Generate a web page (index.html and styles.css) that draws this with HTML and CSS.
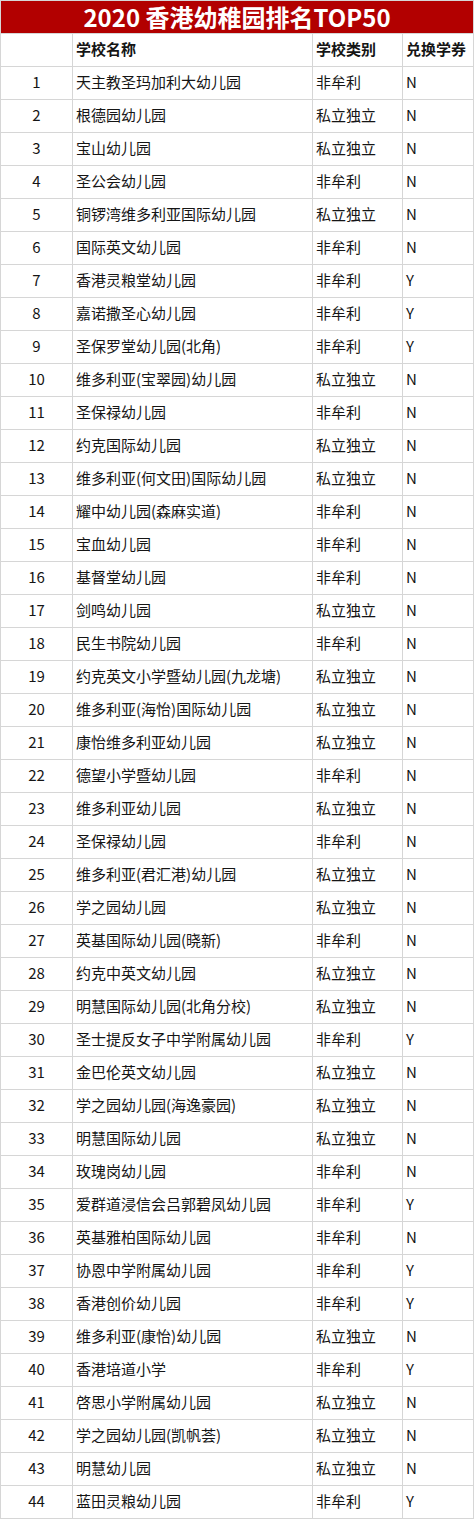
FILE: index.html
```html
<!DOCTYPE html>
<html lang="zh">
<head>
<meta charset="utf-8">
<link rel="stylesheet" href="styles.css">
</head>
<body>
<table class="rank">
<colgroup>
<col class="c-no"><col class="c-name"><col class="c-type"><col class="c-voucher">
</colgroup>
<thead>
<tr><th class="title" colspan="4">2020 香港幼稚园排名TOP50</th></tr>
<tr class="head"><th></th><th>学校名称</th><th>学校类别</th><th>兑换学券</th></tr>
</thead>
<tbody>
<tr><td class="no">1</td><td>天主教圣玛加利大幼儿园</td><td>非牟利</td><td>N</td></tr>
<tr><td class="no">2</td><td>根德园幼儿园</td><td>私立独立</td><td>N</td></tr>
<tr><td class="no">3</td><td>宝山幼儿园</td><td>私立独立</td><td>N</td></tr>
<tr><td class="no">4</td><td>圣公会幼儿园</td><td>非牟利</td><td>N</td></tr>
<tr><td class="no">5</td><td>铜锣湾维多利亚国际幼儿园</td><td>私立独立</td><td>N</td></tr>
<tr><td class="no">6</td><td>国际英文幼儿园</td><td>非牟利</td><td>N</td></tr>
<tr><td class="no">7</td><td>香港灵粮堂幼儿园</td><td>非牟利</td><td>Y</td></tr>
<tr><td class="no">8</td><td>嘉诺撒圣心幼儿园</td><td>非牟利</td><td>Y</td></tr>
<tr><td class="no">9</td><td>圣保罗堂幼儿园(北角)</td><td>非牟利</td><td>Y</td></tr>
<tr><td class="no">10</td><td>维多利亚(宝翠园)幼儿园</td><td>私立独立</td><td>N</td></tr>
<tr><td class="no">11</td><td>圣保禄幼儿园</td><td>非牟利</td><td>N</td></tr>
<tr><td class="no">12</td><td>约克国际幼儿园</td><td>私立独立</td><td>N</td></tr>
<tr><td class="no">13</td><td>维多利亚(何文田)国际幼儿园</td><td>私立独立</td><td>N</td></tr>
<tr><td class="no">14</td><td>耀中幼儿园(森麻实道)</td><td>非牟利</td><td>N</td></tr>
<tr><td class="no">15</td><td>宝血幼儿园</td><td>非牟利</td><td>N</td></tr>
<tr><td class="no">16</td><td>基督堂幼儿园</td><td>非牟利</td><td>N</td></tr>
<tr><td class="no">17</td><td>剑鸣幼儿园</td><td>私立独立</td><td>N</td></tr>
<tr><td class="no">18</td><td>民生书院幼儿园</td><td>非牟利</td><td>N</td></tr>
<tr><td class="no">19</td><td>约克英文小学暨幼儿园(九龙塘)</td><td>私立独立</td><td>N</td></tr>
<tr><td class="no">20</td><td>维多利亚(海怡)国际幼儿园</td><td>私立独立</td><td>N</td></tr>
<tr><td class="no">21</td><td>康怡维多利亚幼儿园</td><td>私立独立</td><td>N</td></tr>
<tr><td class="no">22</td><td>德望小学暨幼儿园</td><td>非牟利</td><td>N</td></tr>
<tr><td class="no">23</td><td>维多利亚幼儿园</td><td>私立独立</td><td>N</td></tr>
<tr><td class="no">24</td><td>圣保禄幼儿园</td><td>非牟利</td><td>N</td></tr>
<tr><td class="no">25</td><td>维多利亚(君汇港)幼儿园</td><td>私立独立</td><td>N</td></tr>
<tr><td class="no">26</td><td>学之园幼儿园</td><td>私立独立</td><td>N</td></tr>
<tr><td class="no">27</td><td>英基国际幼儿园(晓新)</td><td>非牟利</td><td>N</td></tr>
<tr><td class="no">28</td><td>约克中英文幼儿园</td><td>私立独立</td><td>N</td></tr>
<tr><td class="no">29</td><td>明慧国际幼儿园(北角分校)</td><td>私立独立</td><td>N</td></tr>
<tr><td class="no">30</td><td>圣士提反女子中学附属幼儿园</td><td>非牟利</td><td>Y</td></tr>
<tr><td class="no">31</td><td>金巴伦英文幼儿园</td><td>私立独立</td><td>N</td></tr>
<tr><td class="no">32</td><td>学之园幼儿园(海逸豪园)</td><td>私立独立</td><td>N</td></tr>
<tr><td class="no">33</td><td>明慧国际幼儿园</td><td>私立独立</td><td>N</td></tr>
<tr><td class="no">34</td><td>玫瑰岗幼儿园</td><td>非牟利</td><td>N</td></tr>
<tr><td class="no">35</td><td>爱群道浸信会吕郭碧凤幼儿园</td><td>非牟利</td><td>Y</td></tr>
<tr><td class="no">36</td><td>英基雅柏国际幼儿园</td><td>非牟利</td><td>N</td></tr>
<tr><td class="no">37</td><td>协恩中学附属幼儿园</td><td>非牟利</td><td>Y</td></tr>
<tr><td class="no">38</td><td>香港创价幼儿园</td><td>非牟利</td><td>Y</td></tr>
<tr><td class="no">39</td><td>维多利亚(康怡)幼儿园</td><td>私立独立</td><td>N</td></tr>
<tr><td class="no">40</td><td>香港培道小学</td><td>非牟利</td><td>Y</td></tr>
<tr><td class="no">41</td><td>啓思小学附属幼儿园</td><td>私立独立</td><td>N</td></tr>
<tr><td class="no">42</td><td>学之园幼儿园(凯帆荟)</td><td>私立独立</td><td>N</td></tr>
<tr><td class="no">43</td><td>明慧幼儿园</td><td>私立独立</td><td>N</td></tr>
<tr><td class="no">44</td><td>蓝田灵粮幼儿园</td><td>非牟利</td><td>Y</td></tr>
</tbody>
</table>
</body>
</html>
```
FILE: styles.css
```css
html, body {
  margin: 0;
  padding: 0;
  background: #ffffff;
}
.rank {
  border-collapse: collapse;
  table-layout: fixed;
  width: 473px;
  font-family: "Noto Sans CJK SC", "Noto Sans", sans-serif;
  font-size: 15px;
  color: #151515;
}
.c-no { width: 72px; }
.c-name { width: 240px; }
.c-type { width: 90px; }
.c-voucher { width: 71px; }
.rank th, .rank td {
  border: 1px solid #d6d6d6;
  height: 33px;
  box-sizing: border-box;
  padding: 0 3px 2px 3px;
  text-align: left;
  vertical-align: middle;
  white-space: nowrap;
  overflow: hidden;
  line-height: 20px;
}
.rank th {
  font-weight: 700;
}
.rank .title {
  background: #b20000;
  color: #ffffff;
  text-align: center;
  font-size: 24px;
  font-weight: 700;
  border-color: #d6d6d6;
  padding: 0;
  line-height: 28px;
  overflow: visible;
}
.rank td.no {
  text-align: center;
  padding: 0 0 2px 0;
}
```
